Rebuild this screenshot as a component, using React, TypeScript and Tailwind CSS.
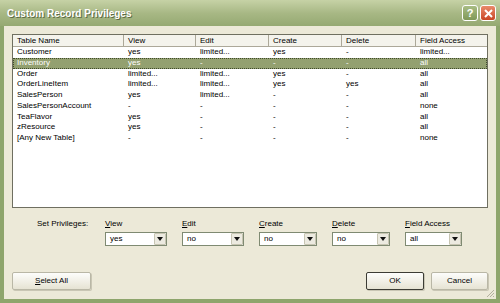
const rows = [
  ['Customer', 'yes', 'limited...', 'yes', '-', 'limited...'],
  ['Inventory', 'yes', '-', '-', '-', 'all'],
  ['Order', 'limited...', 'limited...', 'yes', '-', 'all'],
  ['OrderLineItem', 'limited...', 'limited...', 'yes', 'yes', 'all'],
  ['SalesPerson', 'yes', 'limited...', '-', '-', 'all'],
  ['SalesPersonAccount', '-', '-', '-', '-', 'none'],
  ['TeaFlavor', 'yes', '-', '-', '-', 'all'],
  ['zResource', 'yes', '-', '-', '-', 'all'],
  ['[Any New Table]', '-', '-', '-', '-', 'none'],
]

const headers = ['Table Name', 'View', 'Edit', 'Create', 'Delete', 'Field Access']

const cols = 'grid grid-cols-[111px_72px_73px_73px_74px_1fr]'

function Combo({ value, width }: { value: string; width: string }) {
  return (
    <div className={`${width} h-[14px] bg-white border border-[#7f8a72] flex items-center`}>
      <span className="flex-1 pl-[4px] text-[8px] leading-none">{value}</span>
      <div className="w-[12px] h-[12px] bg-[#eceae0] border border-[#c7c5b2] rounded-[1px] flex items-center justify-center">
        <svg width="6" height="4" viewBox="0 0 6 4">
          <path d="M0 0h6L3 4z" fill="#111" />
        </svg>
      </div>
    </div>
  )
}

function Field({ label, value, width }: { label: React.ReactNode; value: string; width: string }) {
  return (
    <div className="flex flex-col gap-[4px]">
      <span className="text-[8px] leading-none">{label}</span>
      <Combo value={value} width={width} />
    </div>
  )
}

function Button({ children, isDefault, width }: { children: React.ReactNode; isDefault?: boolean; width: string }) {
  return (
    <div
      className={`${width} h-[18px] rounded-[2px] flex items-center justify-center text-[8px] bg-gradient-to-b from-[#fdfdfb] to-[#e6e3d3] shadow-[1px_1px_0_#c9c6b4] ${
        isDefault ? 'border border-[#3c3c34]' : 'border border-[#b9b7a6]'
      }`}
    >
      {children}
    </div>
  )
}

export default function App() {
  return (
    <div className="w-[500px] h-[303px] bg-[#8ea56c] flex flex-col overflow-hidden text-black font-['Liberation_Sans',Arial,sans-serif]">
      {/* Title bar */}
      <div className="h-[26px] flex items-center justify-between pl-[7px] pr-[4px] bg-gradient-to-b from-[#c6d2a6] via-[#a8b885] to-[#95a972]">
        <span className="text-[10px] font-bold text-white [text-shadow:1px_1px_0_#5d6b45]">Custom Record Privileges</span>
        <div className="flex gap-[2px]">
          <div className="w-[16px] h-[16px] rounded-[3px] border border-white bg-gradient-to-b from-[#a9bd84] to-[#7f9858] flex items-center justify-center text-white text-[11px] font-bold leading-none">
            ?
          </div>
          <div className="w-[16px] h-[16px] rounded-[3px] border border-white bg-gradient-to-b from-[#e98a6b] to-[#c94424] flex items-center justify-center">
            <svg width="9" height="9" viewBox="0 0 9 9">
              <path d="M1 1l7 7M8 1l-7 7" stroke="#fff" strokeWidth="2" />
            </svg>
          </div>
        </div>
      </div>

      {/* Body */}
      <div className="flex-1 mx-[4px] mb-[4px] bg-[#ece9d8] flex flex-col px-[8px] pt-[8px] relative">
        {/* List */}
        <div className="h-[174px] bg-white border border-[#6f6f60] flex flex-col">
          <div className={`${cols} h-[12px] bg-[#f4f3ec] border-b border-[#aca899]`}>
            {headers.map((h, i) => (
              <div key={h} className={`pl-[4px] text-[8px] leading-[11px] ${i < 5 ? 'border-r border-[#aca899]' : ''}`}>
                {h}
              </div>
            ))}
          </div>
          {rows.map((r, i) => (
            <div
              key={r[0]}
              className={`${cols} h-[10.75px] text-[8px] leading-[10.75px] ${
                i === 1 ? 'bg-[#93a070] text-white outline outline-1 outline-dotted outline-[#3f4a2c] -outline-offset-1' : ''
              }`}
            >
              {r.map((c, j) => (
                <div key={j} className="pl-[4px] whitespace-nowrap">
                  {c}
                </div>
              ))}
            </div>
          ))}
        </div>

        {/* Set privileges */}
        <div className="flex items-start mt-[12px] pl-[25px]">
          <span className="w-[68px] text-[8px] leading-none">Set Privileges:</span>
          <div className="flex gap-[15px]">
            <Field label={<><u>V</u>iew</>} value="yes" width="w-[62px]" />
            <Field label={<><u>E</u>dit</>} value="no" width="w-[62px]" />
            <Field label={<><u>C</u>reate</>} value="no" width="w-[58px]" />
            <Field label={<><u>D</u>elete</>} value="no" width="w-[58px]" />
            <Field label={<><u>F</u>ield Access</>} value="all" width="w-[57px]" />
          </div>
        </div>

        {/* Buttons */}
        <div className="flex items-center justify-between mt-[26px]">
          <Button width="w-[79px]">
            <span>
              <u>S</u>elect All
            </span>
          </Button>
          <div className="flex gap-[7px]">
            <Button width="w-[58px]" isDefault>
              OK
            </Button>
            <Button width="w-[57px]">Cancel</Button>
          </div>
        </div>

        <svg className="absolute right-[1px] bottom-[1px]" width="10" height="10" viewBox="0 0 10 10">
          <path d="M9 2L2 9M9 5L5 9M9 8L8 9" stroke="#b3b09d" strokeWidth="1" />
        </svg>
      </div>
    </div>
  )
}
